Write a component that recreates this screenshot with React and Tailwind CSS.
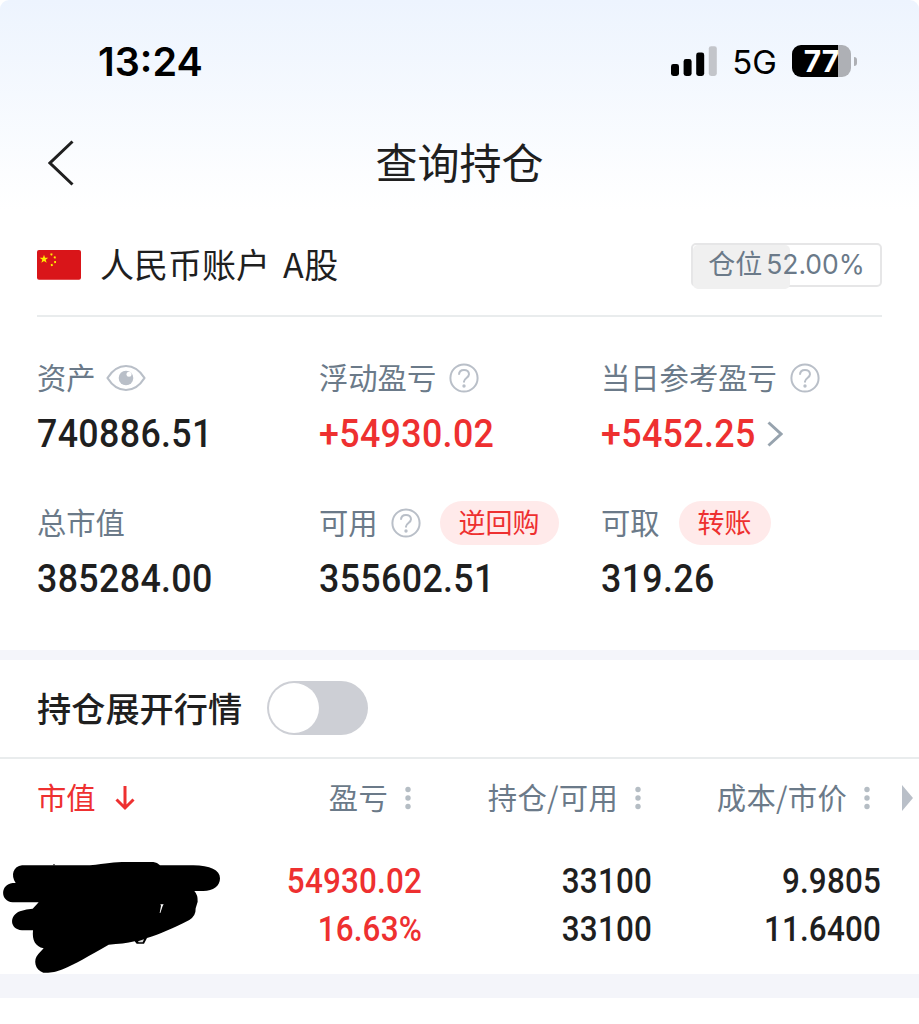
import { useState } from "react";

const summary = [
	{ label: "资产", value: "740886.51", icon: "eye" },
	{ label: "浮动盈亏", value: "+54930.02", icon: "help", up: true },
	{
		label: "当日参考盈亏",
		value: "+5452.25",
		icon: "help",
		up: true,
		link: true,
	},
	{ label: "总市值", value: "385284.00" },
	{ label: "可用", value: "355602.51", icon: "help", action: "逆回购" },
	{ label: "可取", value: "319.26", action: "转账" },
];

const columns = ["盈亏", "持仓/可用", "成本/市价"];

const position = [
	{ values: ["54930.02", "16.63%"], up: true },
	{ values: ["33100", "33100"] },
	{ values: ["9.9805", "11.6400"] },
];

function SignalIcon() {
	return (
		<svg width="46" height="32" viewBox="0 0 46 32" className="mr-[15px]">
			<rect x="0" y="19" width="8" height="12" rx="2.4" />
			<rect x="12.6" y="14" width="8" height="17" rx="2.4" />
			<rect x="25.2" y="7.5" width="8" height="23.5" rx="2.4" />
			<rect x="37.8" y="1.2" width="8" height="29.8" rx="2.4" fill="#c3c5ca" />
		</svg>
	);
}

function Battery() {
	return (
		<div className="flex items-center">
			<div className="flex h-8 w-[59px] items-center justify-center rounded-[9px] bg-[linear-gradient(90deg,#000_46px,#aeb0b5_46px)] text-[30px] leading-8 font-bold text-white">
				<span>77</span>
			</div>
			<div className="ml-[3px] h-[9px] w-[3px] rounded-r-full bg-[#aeb0b5]" />
		</div>
	);
}

function FlagIcon() {
	return (
		<svg width="44" height="30" viewBox="0 0 132 90" className="mt-[2px] mr-[19px]">
			<rect width="132" height="89" rx="6" fill="#d91519" />
			<g fill="#ffee00">
				<path d="M21 14l3.200 9.500h9.800l-8 5.700 3 9.300-8-5.700-8 5.700 3-9.300-8-5.700h9.800z" />
				<path d="M41 10l6 1-2 6-5-2z" />
				<path d="M51 19l6 1-2 6-5-2z" />
				<path d="M51 34l6-1v6l-5 1z" />
				<path d="M41 43l5-2 2 6-6 2z" />
			</g>
		</svg>
	);
}

function EyeIcon() {
	return (
		<svg width="40" height="28" viewBox="0 0 40 28" className="ml-[10px]">
			<path
				d="M1.500 14C6.500 6 13 2 20 2s13.500 4 18.500 12C33.500 22 27 26 20 26S6.500 22 1.500 14z"
				fill="none"
				stroke="#b9bfc8"
				strokeWidth="2.200"
				strokeLinejoin="round"
			/>
			<circle cx="20" cy="14" r="7.300" fill="#b9bfc8" />
			<circle cx="23" cy="10.300" r="2.500" fill="#fff" />
		</svg>
	);
}

function HelpIcon() {
	return (
		<svg
			width="30"
			height="30"
			viewBox="0 0 30 30"
			fill="none"
			stroke="#b9bfc8"
			strokeWidth="2"
			className="ml-[13px]"
		>
			<circle cx="15" cy="15" r="13.600" />
			<path d="M10 11.800c0-3 2.100-4.900 5-4.900s5 1.800 5 4.400c0 3.500-5 3.900-5 7.300v.8" />
			<circle cx="15" cy="23" r="1.700" fill="#b9bfc8" stroke="none" />
		</svg>
	);
}

function DotsIcon() {
	return (
		<svg width="6" height="24" viewBox="0 0 6 24" fill="#b5bdc4" className="ml-[17px]">
			<circle cx="3" cy="3.500" r="2.700" />
			<circle cx="3" cy="12" r="2.700" />
			<circle cx="3" cy="20.500" r="2.700" />
		</svg>
	);
}

// Tachado a mano sobre el nombre del valor
function Scribble() {
	return (
		<svg width="225" height="115" viewBox="0 60 675 345">
			<path d="M66 76H270C320 71 340 66 380 66H460Q472 67 480 76H580C630 77 660 90 660 115C660 138 640 153 610 153H583Q594 165 593 185L587 205Q588 228 568 240C520 264 480 282 441 294L432 311H410L404 304Q370 312 326 314C270 346 220 375 190 387C165 397 150 399 130 398C105 390 98 360 115 342L131 325C105 320 96 300 99 271H66C28 268 27 226 60 214Q80 207 98 206L116 187H38C0 184 0 133 38 129H47C31 105 40 79 66 76z" />
			<path d="M481 193h10l-3 5-7 21h-2l4-22z" fill="#fff" />
			<path d="M414 304l18-6-4 9h-12z" fill="#ddd" />
			<path d="M158 76l4-4 4 4z" />
		</svg>
	);
}

function SummaryItem({ item }) {
	return (
		<div>
			<div className="flex h-11 items-center text-[29.3px] leading-none text-[#6b7a89]">
				<span className="pb-[3px] whitespace-nowrap">{item.label}</span>
				{item.icon === "eye" && <EyeIcon />}
				{item.icon === "help" && <HelpIcon />}
				{item.action && (
					<button
						type="button"
						className="ml-[19px] h-11 rounded-full bg-[#ffeaea] px-[19px] pb-[3px] text-[27px] leading-none text-[#ee3030]"
					>
						{item.action}
					</button>
				)}
			</div>
			<div
				className={`mt-2 flex h-[50px] items-center pt-px font-[Roboto] text-[39.5px] leading-none font-medium ${
					item.up ? "text-[#ee3030]" : "text-[#1f1f1f]"
				}`}
			>
				<span className="origin-left scale-x-[0.905] tracking-[0.4px]">
					{item.value}
				</span>
				{item.link && (
					<svg
						width="16"
						height="26"
						viewBox="0 0 16 26"
						fill="none"
						stroke="#97a3ae"
						strokeWidth="3"
						className="-ml-[5px]"
					>
						<path d="M1.500 1.500L14 13 1.500 24.500" />
					</svg>
				)}
			</div>
		</div>
	);
}

export default function App() {
	const [expanded, setExpanded] = useState(false);

	return (
		<div className="h-[1024px] w-[919px] overflow-hidden bg-white font-['Noto_Sans_CJK_SC',sans-serif] text-[#1f1f1f]">
			<header className="h-[210px] rounded-t-[9px] bg-linear-to-b from-[#edf4fe] to-white">
				<div className="flex h-[122px] items-center justify-between pr-[62px] pl-[98px] font-[Inter] text-black">
					<span className="pt-[3px] text-[39.5px] leading-none font-semibold">
						13:24
					</span>
					<div className="flex items-center">
						<SignalIcon />
						<span className="mr-[15px] pt-[3px] text-[33px] leading-none">
							5G
						</span>
						<Battery />
					</div>
				</div>
				<div className="grid h-[82px] grid-cols-[1fr_auto_1fr] items-center px-12">
					<svg
						width="26"
						height="46"
						viewBox="0 0 26 46"
						fill="none"
						stroke="#1f1f1f"
						strokeWidth="3"
					>
						<path d="M24.500 1.500L2 23l22.500 21.500" />
					</svg>
					<h1 className="pb-[5px] text-[42px] leading-none">查询持仓</h1>
				</div>
			</header>

			<section className="h-[440px] px-[37px]">
				<div className="flex h-[107px] items-center justify-between border-b-2 border-[#e9eced] pt-[3px]">
					<div className="flex items-center text-[34px] leading-none">
						<FlagIcon />
						<span className="pb-px">人民币账户</span>
						<span className="ml-[13px] pb-px tracking-[0.5px]">A股</span>
					</div>
					<div className="relative mt-px flex h-11 w-[191px] items-center justify-center rounded-[5px] border-2 border-[#e6e6e7] text-[27px] leading-none text-[#6b7a89]">
						<div className="absolute top-0 left-0 h-11 w-[97px] rounded-[5px] bg-[#f0f0f0]" />
						<span className="relative pb-[4px]">仓位</span>
						<span className="relative ml-1 font-[Inter] text-[26.5px]">
							52.00%
						</span>
					</div>
				</div>
				<div className="grid grid-cols-[282px_282px_1fr] gap-y-[43px] pt-[39px]">
					{summary.map((item) => (
						<SummaryItem key={item.label} item={item} />
					))}
				</div>
			</section>

			<div className="h-[10px] bg-[#f4f5fa]" />

			<section className="flex h-[99px] items-center border-b-2 border-[#e9eced] px-[37px] pb-[2px]">
				<h2 className="text-[34.2px] leading-none font-medium">持仓展开行情</h2>
				<button
					type="button"
					role="switch"
					aria-checked={expanded}
					onClick={() => setExpanded(!expanded)}
					className={`ml-[25px] flex h-[54px] w-[101px] items-center rounded-full bg-[#cdcfd5] px-[2px] ${
						expanded ? "justify-end" : ""
					}`}
				>
					<span className="size-[50px] rounded-full bg-white" />
				</button>
			</section>

			<section className="h-[215px]">
				<div className="flex h-[78px] items-center text-[29.3px] leading-none text-[#6b7a89]">
					<div className="grid w-[870px] grid-cols-[214px_197px_230px_229px] items-center">
						<div className="flex items-center pl-[37px] text-[#ee3030]">
							<span className="pb-[2px]">市值</span>
							<svg
								width="20"
								height="26"
								viewBox="0 0 20 26"
								fill="none"
								stroke="#ee3030"
								strokeWidth="3"
								className="ml-[19px]"
							>
								<path d="M10 1v22M1.500 14.500L10 23l8.500-8.500" />
							</svg>
						</div>
						{columns.map((name) => (
							<div key={name} className="flex items-center justify-end">
								<span className="pb-[2px] tracking-[0.3px]">{name}</span>
								<DotsIcon />
							</div>
						))}
					</div>
					<svg width="12" height="26" viewBox="0 0 12 26" className="ml-8">
						<path d="M0 0l11 13L0 26z" fill="#b9bfc8" />
					</svg>
				</div>
				<div className="grid w-[881px] grid-cols-[225px_197px_230px_229px] pt-5">
					<div className="pt-[3px]">
						<Scribble />
					</div>
					{position.map((cell) => (
						<div
							key={cell.values[0]}
							className={`origin-right scale-x-[0.885] text-right font-[Roboto] text-[35.5px] leading-[48px] font-medium tracking-[0.2px] ${
								cell.up ? "text-[#ee3030]" : ""
							}`}
						>
							{cell.values.map((value, i) => (
								<div key={i}>{value}</div>
							))}
						</div>
					))}
				</div>
			</section>

			<div className="h-6 bg-[#f4f5fa]" />
		</div>
	);
}
